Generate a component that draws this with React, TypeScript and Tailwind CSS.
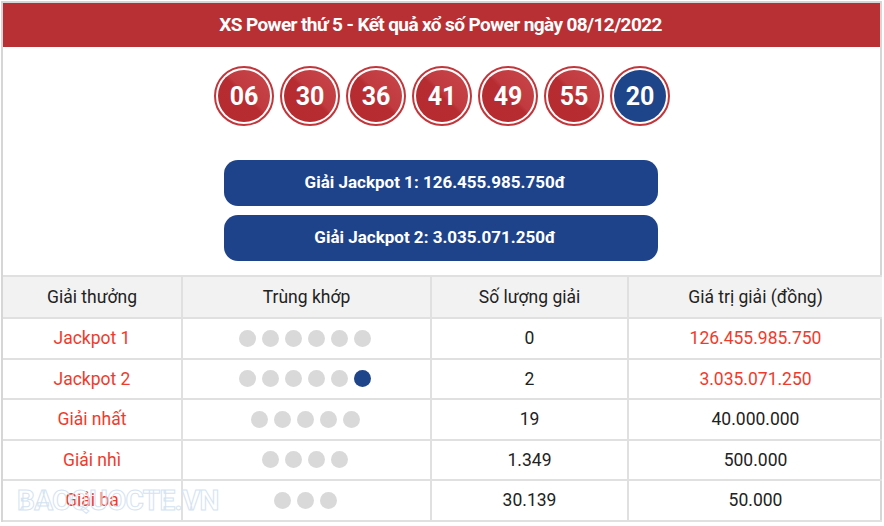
import React from "react";

const balls = ["06", "30", "36", "41", "49", "55"];

const rows = [
  { name: "Jackpot 1", dots: 6, special: false, count: "0", value: "126.455.985.750", red: true },
  { name: "Jackpot 2", dots: 5, special: true, count: "2", value: "3.035.071.250", red: true },
  { name: "Giải nhất", dots: 5, special: false, count: "19", value: "40.000.000", red: false },
  { name: "Giải nhì", dots: 4, special: false, count: "1.349", value: "500.000", red: false },
  { name: "Giải ba", dots: 3, special: false, count: "30.139", value: "50.000", red: false },
];

function Ball({ n, blue }: { n: string; blue?: boolean }) {
  return (
    <div className="w-[60px] h-[60px] rounded-full border-2 border-[#c2363b] bg-white p-[2px]">
      <div
        className={
          blue
            ? "w-full h-full rounded-full bg-[#1e448a] flex items-center justify-center"
            : "w-full h-full rounded-full bg-[linear-gradient(225deg,#c9464b_0%,#c03a3f_45%,#b72c31_50%,#b52b30_100%)] flex items-center justify-center"
        }
      >
        <span className="text-white font-bold text-[25px] leading-none">{n}</span>
      </div>
    </div>
  );
}

function Dots({ count, special }: { count: number; special: boolean }) {
  return (
    <div className="flex items-center justify-center gap-[6px] pr-[3px]">
      {Array.from({ length: count }).map((_, i) => (
        <span key={i} className="w-[17px] h-[17px] rounded-full bg-[#d9d9d9]" />
      ))}
      {special && <span className="w-[17px] h-[17px] rounded-full bg-[#1e448a]" />}
    </div>
  );
}

export default function App() {
  return (
    <div className="w-[884px] h-[526px] bg-white font-['Roboto',sans-serif] overflow-hidden">
      <div className="ml-[1px] mt-[1px] w-[881px] border-l-2 border-t-2 border-r-2 border-[#d6d6d6] relative">
        {/* header */}
        <div className="h-[44px] bg-[#b83034] flex items-center justify-center">
          <h1 className="text-white font-bold text-[19px] tracking-[-0.6px] pr-[2px]">
            XS Power thứ 5 - Kết quả xổ số Power ngày 08/12/2022
          </h1>
        </div>

        {/* balls */}
        <div className="flex justify-center gap-[6px] pt-[19px] pl-[1px]">
          {balls.map((b) => (
            <Ball key={b} n={b} />
          ))}
          <Ball n="20" blue />
        </div>

        {/* jackpots */}
        <div className="flex flex-col items-center gap-[9px] mt-[34px] pr-[2px]">
          <div className="w-[434px] h-[46px] rounded-[14px] bg-[#1e438a] flex items-center justify-center pr-[11px] text-white font-bold text-[17px]">
            Giải Jackpot 1: 126.455.985.750đ
          </div>
          <div className="w-[434px] h-[46px] rounded-[14px] bg-[#1e438a] flex items-center justify-center pr-[11px] text-white font-bold text-[17px]">
            Giải Jackpot 2: 3.035.071.250đ
          </div>
        </div>

        {/* table */}
        <table className="mt-[14px] w-[879px] border-collapse text-[17.5px] text-[#222] text-center">
          <thead>
            <tr className="bg-[#f2f2f2] h-[42px]">
              <th className="font-normal border-2 border-l-0 border-[#e0e0e0] w-[179px]">Giải thưởng</th>
              <th className="font-normal border-2 border-[#e0e0e0] w-[249px]">Trùng khớp</th>
              <th className="font-normal border-2 border-[#e0e0e0] w-[197px]">Số lượng giải</th>
              <th className="font-normal border-2 border-r-0 border-[#e0e0e0]">Giá trị giải (đồng)</th>
            </tr>
          </thead>
          <tbody>
            {rows.map((r) => (
              <tr key={r.name} className="h-[40.5px]">
                <td className="border-2 border-l-0 border-[#e0e0e0] text-[#ef3b2c]">{r.name}</td>
                <td className="border-2 border-[#e0e0e0]">
                  <Dots count={r.dots} special={r.special} />
                </td>
                <td className="border-2 border-[#e0e0e0]">{r.count}</td>
                <td className={`border-2 border-r-0 border-[#e0e0e0] ${r.red ? "text-[#ef3b2c]" : ""}`}>{r.value}</td>
              </tr>
            ))}
          </tbody>
        </table>

        {/* watermark */}
        <div
          aria-hidden
          className="absolute left-[14px] bottom-[0px] text-[28px] font-bold tracking-[-0.7px] text-transparent [-webkit-text-stroke:1px_#d4e3f1] pointer-events-none"
        >
          BAOQUOCTE.VN
        </div>
      </div>
    </div>
  );
}
